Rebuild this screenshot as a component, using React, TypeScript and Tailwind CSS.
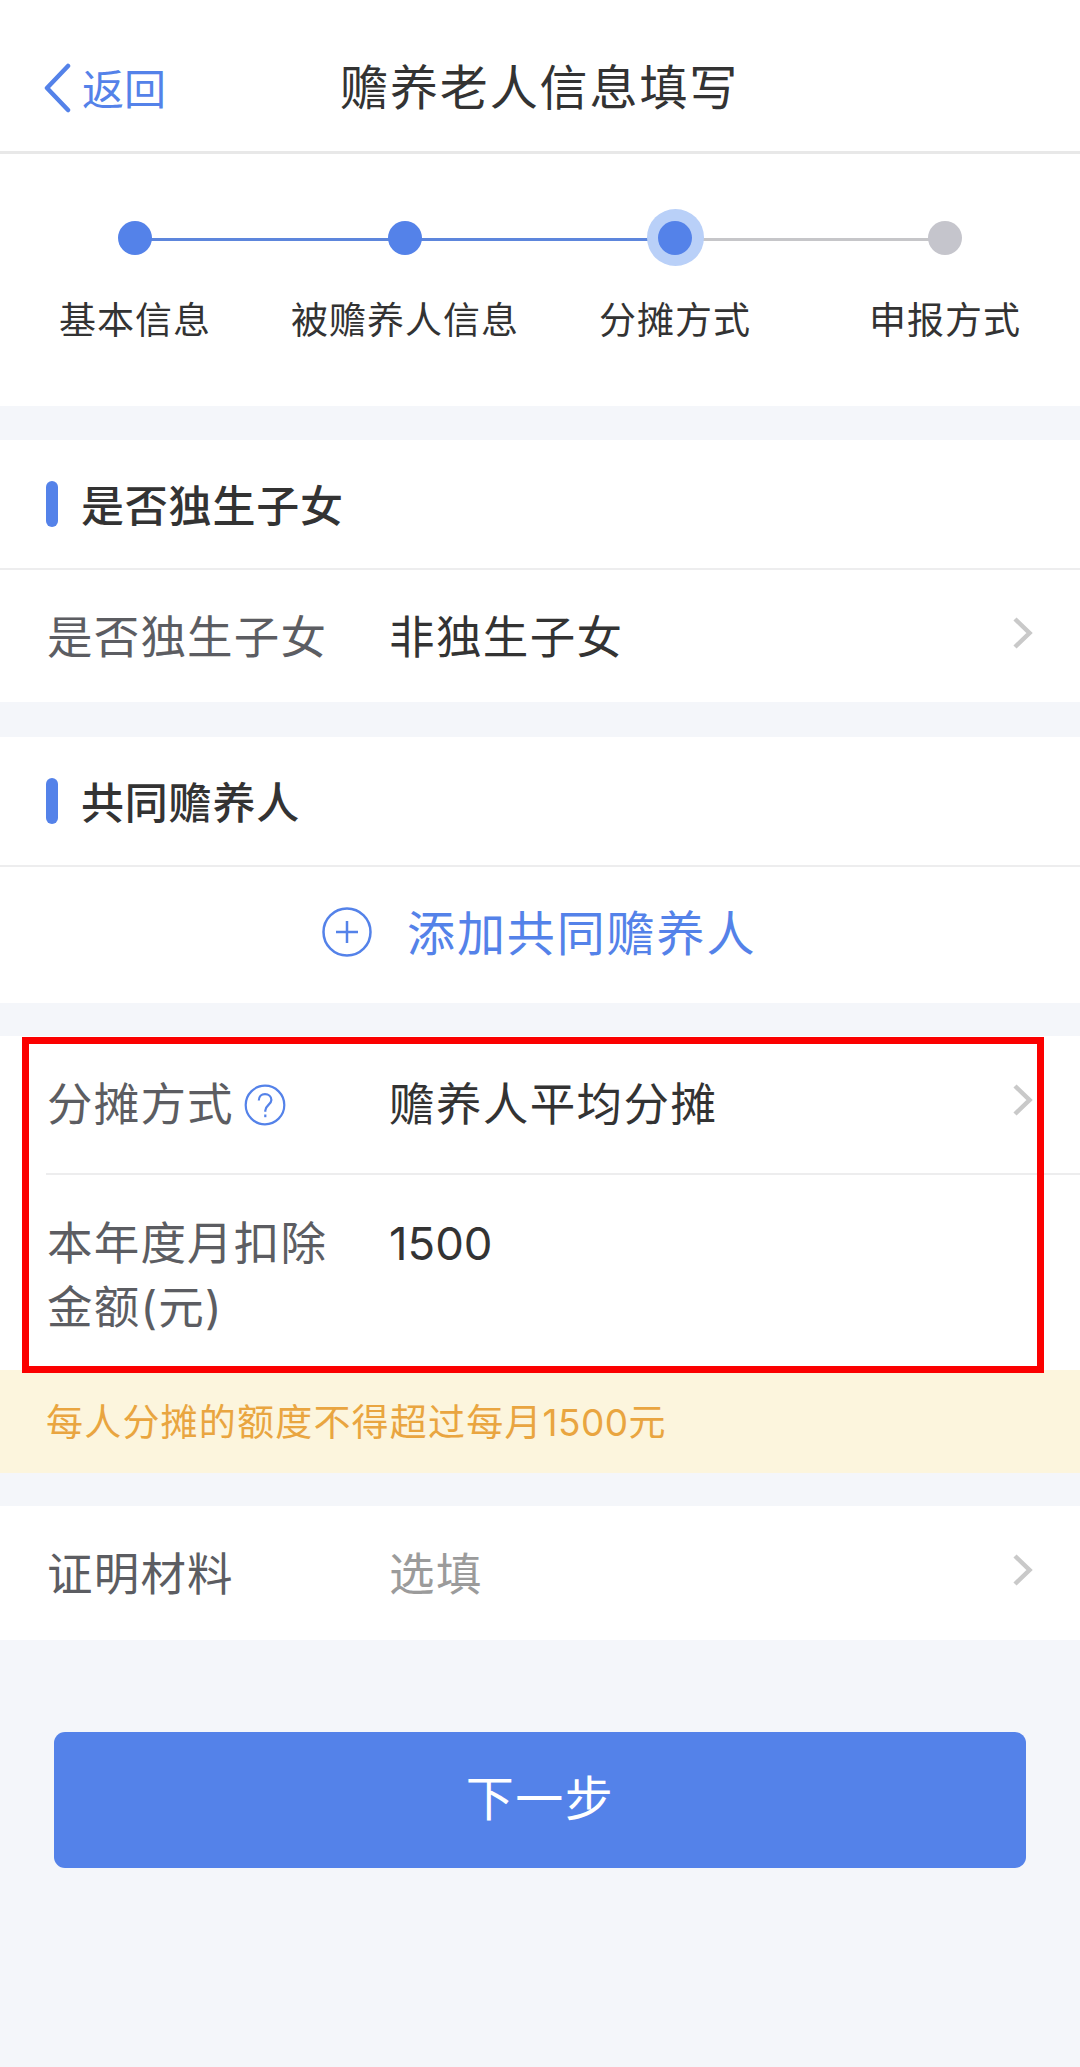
import type { ReactNode } from 'react';

type StepState = 'done' | 'current' | 'todo';

const steps: { label: string; state: StepState }[] = [
  { label: '基本信息', state: 'done' },
  { label: '被赡养人信息', state: 'done' },
  { label: '分摊方式', state: 'current' },
  { label: '申报方式', state: 'todo' },
];

function ChevronRight() {
  return (
    <svg className="w-[22px] h-[36px] shrink-0" viewBox="0 0 22 36" fill="none" stroke="#c9c9c9" strokeWidth="4.5">
      <path d="M3 4 L17.5 18 L3 32" />
    </svg>
  );
}

function Header() {
  return (
    <header className="flex items-center h-[154px] pt-[25px] border-b-[3px] border-[#e8e8e8] bg-white">
      <button className="flex items-center ml-[43px] text-[#5482e9]">
        <svg className="w-[28px] h-[50px]" viewBox="0 0 28 50" fill="none" stroke="currentColor" strokeWidth="4.5" strokeLinecap="round" strokeLinejoin="round">
          <path d="M25 3 L4 25 L25 47" />
        </svg>
        <span className="ml-[11px] pt-[3px] text-[42px] leading-[50px]">返回</span>
      </button>
      <h1 className="ml-[174px] text-[48px] leading-[60px] tracking-[1.9px] text-[#333333]">赡养老人信息填写</h1>
    </header>
  );
}

function Steps() {
  return (
    <div className="grid grid-cols-4 h-[252px] pt-[55px] bg-white">
      {steps.map((step, i) => (
        <div key={step.label} className="flex flex-col items-center">
          <div className="relative flex items-center justify-center w-full h-[57px]">
            {/* connector to the next step */}
            {i < steps.length - 1 && (
              <div
                className={`absolute left-1/2 top-[29px] w-full h-[3px] ${
                  step.state === 'done' ? 'bg-[#5d86dc]' : 'bg-[#c6c6c9]'
                }`}
              />
            )}
            <div
              className={`relative z-10 flex items-center justify-center rounded-full w-[57px] h-[57px] ${
                step.state === 'current' ? 'bg-[#b9d0f8]' : ''
              }`}
            >
              <div
                className={`w-[34px] h-[34px] rounded-full ${step.state === 'todo' ? 'bg-[#c5c5cc]' : 'bg-[#5482e9]'}`}
              />
            </div>
          </div>
          <span className="mt-[31px] text-[37px] leading-[48px] tracking-[1px] text-[#333333]">{step.label}</span>
        </div>
      ))}
    </div>
  );
}

function SectionTitle({ children }: { children: ReactNode }) {
  return (
    <div className="flex items-center h-[130px] pl-[46px] border-b-2 border-[#ededee]">
      <span className="w-[12px] h-[46px] rounded-full bg-[#5482e9]" />
      <h2 className="ml-[23px] pt-[3px] text-[43px] leading-[56px] tracking-[0.8px] font-medium text-[#333333]">{children}</h2>
    </div>
  );
}

function Label({ children }: { children: ReactNode }) {
  return (
    <div className="flex items-center w-[342px] text-[45.5px] leading-[64px] tracking-[1.2px] text-[#5c5d62]">{children}</div>
  );
}

function Value({ children, muted }: { children: ReactNode; muted?: boolean }) {
  return (
    <div className={`flex-1 text-[45.5px] leading-[64px] tracking-[1.4px] ${muted ? 'text-[#9b9b9b]' : 'text-[#333333]'}`}>
      {children}
    </div>
  );
}

function App() {
  return (
    <div className="w-[1080px] min-h-[2067px] bg-[#f4f6fa] font-['Inter','Noto_Sans_CJK_SC',sans-serif]">
      <Header />
      <Steps />

      <section className="mt-[34px] bg-white">
        <SectionTitle>是否独生子女</SectionTitle>
        <div className="flex items-center h-[132px] pt-[4px] pl-[47px] pr-[46px]">
          <Label>是否独生子女</Label>
          <Value>非独生子女</Value>
          <div className="pb-[10px]">
            <ChevronRight />
          </div>
        </div>
      </section>

      <section className="mt-[35px] bg-white">
        <SectionTitle>共同赡养人</SectionTitle>
        <button className="flex items-center w-full h-[136px] pb-[6px] pl-[322px] text-[#5482e9]">
          <svg className="w-[50px] h-[50px]" viewBox="0 0 50 50" fill="none" stroke="currentColor" strokeWidth="2.5">
            <circle cx="25" cy="25" r="23.5" />
            <path d="M14 25 H36 M25 14 V36" />
          </svg>
          <span className="ml-[35px] pt-[4px] text-[48px] leading-[60px] tracking-[1.9px]">添加共同赡养人</span>
        </button>
      </section>

      <section className="relative mt-[33px] bg-white">
        <div className="flex items-center h-[139px] ml-[46px] pl-px pr-[46px] border-b-2 border-[#ededee]">
          <Label>
            分摊方式
            <svg className="ml-[10px] mt-px w-[42px] h-[42px]" viewBox="0 0 42 42" fill="none" stroke="#5482e9" strokeWidth="2.2">
              <circle cx="21" cy="21" r="19.3" />
              <path d="M14.8 16.5 C14.8 12.5 17.5 10.2 21 10.2 C24.6 10.2 27.4 12.6 27.4 16 C27.4 20.6 21.3 21.2 21.3 26.5 V27.8" />
              <path d="M21.3 30.5 V33.2" />
            </svg>
          </Label>
          <Value>赡养人平均分摊</Value>
          <div className="pb-[9px]">
            <ChevronRight />
          </div>
        </div>
        <div className="flex items-start h-[195px] pt-[37px] pl-[47px]">
          <Label>
            本年度月扣除
            <br />
            金额(元)
          </Label>
          <Value>
            <span className="tracking-[0px]">1500</span>
          </Value>
        </div>
        {/* highlight frame */}
        <div className="absolute z-10 left-[22px] top-[1px] w-[1022px] h-[336px] border-[7px] border-[#fb0000]" />
      </section>

      <div className="flex items-center h-[103px] pt-[2px] pl-[46px] bg-[#fcf5dd] text-[37px] leading-[48px] tracking-[1.2px] text-[#e9a540]">
        <p>
          每人分摊的额度不得超过每月<span className="tracking-[0.4px]">1500</span>元
        </p>
      </div>

      <section className="mt-[33px] flex items-center h-[134px] pt-[4px] pl-[47px] pr-[46px] bg-white">
        <Label>证明材料</Label>
        <Value muted>选填</Value>
        <div className="pb-[10px]">
          <ChevronRight />
        </div>
      </section>

      <div className="pt-[92px] px-[54px]">
        <button className="w-full h-[136px] pb-[2px] rounded-[11px] bg-[#5482e9] text-white text-[48px] leading-[60px] tracking-[1.5px]">
          下一步
        </button>
      </div>
    </div>
  );
}

export default App;
